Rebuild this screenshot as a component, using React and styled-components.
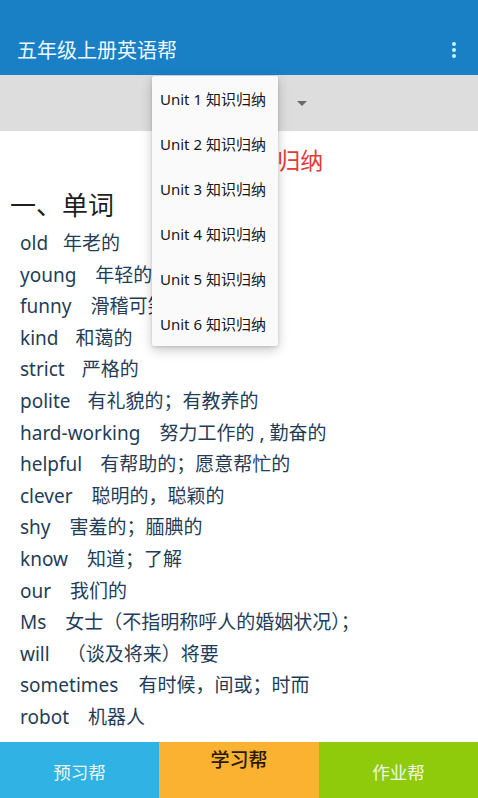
import React from 'react';
import styled, { createGlobalStyle } from 'styled-components';

const GlobalStyle = createGlobalStyle`
  html, body {
    margin: 0;
    padding: 0;
    background: #ffffff;
  }
  body {
    font-family: "Noto Sans", "Noto Sans CJK SC", sans-serif;
  }
`;

const Screen = styled.div`
  position: relative;
  display: flex;
  flex-direction: column;
  width: 478px;
  height: 798px;
  overflow: hidden;
  background: #ffffff;
`;

const AppBar = styled.header`
  display: flex;
  align-items: center;
  justify-content: space-between;
  height: 75px;
  padding: 24px 14px 0 17px;
  box-sizing: border-box;
  background: #1a80c6;
  color: #eef7ff;
`;

const Title = styled.h1`
  margin: 0;
  font-size: 20px;
  font-weight: 400;
`;

const MenuButton = styled.div`
  display: flex;
  align-items: center;
  justify-content: center;
  width: 20px;
  height: 30px;
`;

const SpinnerBar = styled.div`
  display: flex;
  align-items: center;
  height: 56px;
  background: #dddddd;
  padding-left: 297px;
  box-sizing: border-box;
`;

const Content = styled.main`
  flex: 1;
  overflow: hidden;
  padding: 12px 0 0 0;
`;

const UnitHeading = styled.h2`
  margin: 0;
  text-align: center;
  font-size: 23px;
  line-height: 34px;
  font-weight: 400;
  color: #e33b36;
  padding-left: 6px;
`;

const SectionHeading = styled.h3`
  margin: 10px 0 0 10px;
  font-size: 26px;
  line-height: 36px;
  font-weight: 400;
  color: #1e1e1e;
`;

const WordList = styled.ul`
  list-style: none;
  margin: 5px 0 0 0;
  padding: 0 0 0 20px;
`;

const WordRow = styled.li`
  display: flex;
  font-size: 19px;
  line-height: 31.6px;
  color: #1f3d58;
  white-space: nowrap;
`;

const Meaning = styled.span`
  margin-left: ${p => p.$gap}px;
`;

const Popup = styled.ul`
  position: absolute;
  top: 76px;
  left: 152px;
  width: 126px;
  margin: 0;
  padding: 0;
  list-style: none;
  background: #fafafa;
  border-radius: 2px;
  box-shadow: 0 4px 12px rgba(0, 0, 0, 0.22), 0 1px 3px rgba(0, 0, 0, 0.12);
  z-index: 2;
`;

const PopupItem = styled.li`
  height: 45px;
  display: flex;
  align-items: center;
  padding-left: 8px;
  font-size: 15px;
  color: #161616;
  white-space: nowrap;
`;

const BottomNav = styled.nav`
  display: grid;
  grid-template-columns: 159px 160px 1fr;
  height: 56px;
`;

const NavTab = styled.div`
  display: flex;
  justify-content: center;
  align-items: ${p => (p.$active ? 'flex-start' : 'center')};
  padding-top: ${p => (p.$active ? '3px' : '2px')};
  box-sizing: border-box;
  background: ${p => p.$bg};
  color: ${p => (p.$active ? '#2b1a05' : '#eef6ea')};
  font-size: ${p => (p.$active ? '19px' : '17.5px')};
  font-weight: ${p => (p.$active ? 500 : 400)};
`;

const words = [
  ['old', '年老的', 15],
  ['young', '年轻的', 19],
  ['funny', '滑稽可笑的', 19],
  ['kind', '和蔼的', 17],
  ['strict', '严格的', 17],
  ['polite', '有礼貌的；有教养的', 17],
  ['hard-working', '努力工作的 , 勤奋的', 19],
  ['helpful', '有帮助的；愿意帮忙的', 18],
  ['clever', '聪明的，聪颖的', 19],
  ['shy', '害羞的；腼腆的', 19],
  ['know', '知道；了解', 19],
  ['our', '我们的', 19],
  ['Ms', '女士（不指明称呼人的婚姻状况）；', 19],
  ['will', '（谈及将来）将要', 17],
  ['sometimes', '有时候，间或；时而', 20],
  ['robot', '机器人', 19],
];

const units = [1, 2, 3, 4, 5, 6];

const Kebab = () => (
  <svg width="6" height="18" viewBox="0 0 6 18">
    <circle cx="3" cy="3" r="2" fill="#c9f1ff" />
    <circle cx="3" cy="9" r="2" fill="#c9f1ff" />
    <circle cx="3" cy="15" r="2" fill="#c9f1ff" />
  </svg>
);

const DropArrow = () => (
  <svg width="10" height="5" viewBox="0 0 10 5">
    <path d="M0 0 L10 0 L5 5 Z" fill="#6a6a6a" />
  </svg>
);

export default function App() {
  return (
    <>
      <GlobalStyle />
      <Screen>
        <AppBar>
          <Title>五年级上册英语帮</Title>
          <MenuButton>
            <Kebab />
          </MenuButton>
        </AppBar>
        <SpinnerBar>
          <DropArrow />
        </SpinnerBar>
        <Content>
          <UnitHeading>Unit 1 知识归纳</UnitHeading>
          <SectionHeading>一、单词</SectionHeading>
          <WordList>
            {words.map(([en, zh, gap]) => (
              <WordRow key={en}>
                <span>{en}</span>
                <Meaning $gap={gap}>{zh}</Meaning>
              </WordRow>
            ))}
          </WordList>
        </Content>
        <BottomNav>
          <NavTab $bg="#30b2e5">预习帮</NavTab>
          <NavTab $bg="#fbb231" $active>学习帮</NavTab>
          <NavTab $bg="#8fcb0b">作业帮</NavTab>
        </BottomNav>
        <Popup>
          {units.map(n => (
            <PopupItem key={n}>Unit {n} 知识归纳</PopupItem>
          ))}
        </Popup>
      </Screen>
    </>
  );
}
